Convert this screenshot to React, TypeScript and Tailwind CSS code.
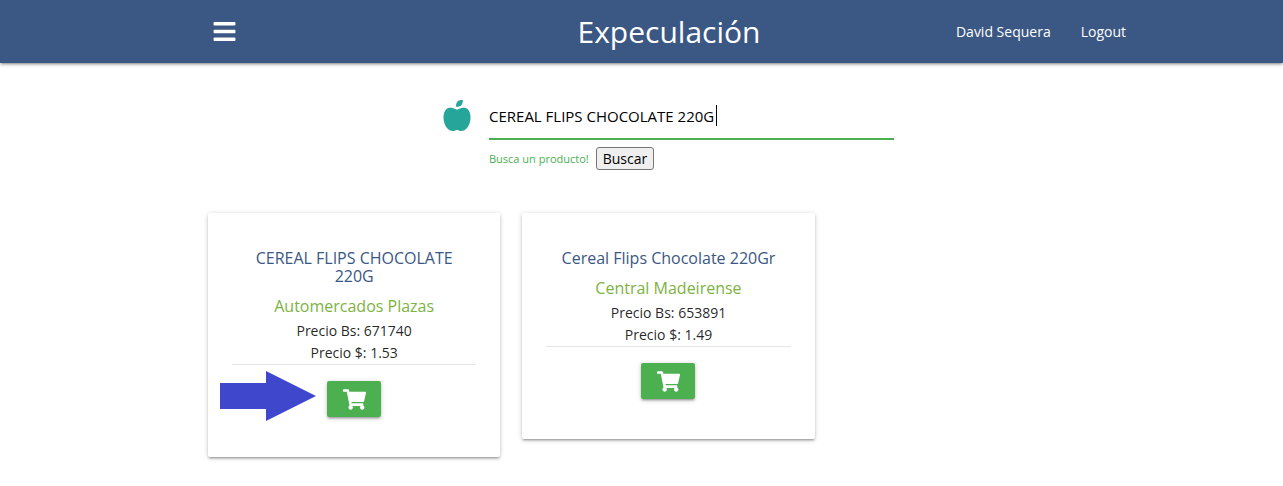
import { useState } from "react";
import { FaAppleAlt, FaBars, FaShoppingCart } from "react-icons/fa";

const products = [
  {
    name: "CEREAL FLIPS CHOCOLATE 220G",
    store: "Automercados Plazas",
    bs: "671740",
    usd: "1.53",
    highlighted: true,
  },
  {
    name: "Cereal Flips Chocolate 220Gr",
    store: "Central Madeirense",
    bs: "653891",
    usd: "1.49",
    highlighted: false,
  },
];

type Product = (typeof products)[number];

const shadow =
  "shadow-[0_2px_2px_0_rgba(0,0,0,0.14),0_3px_1px_-2px_rgba(0,0,0,0.12),0_1px_5px_0_rgba(0,0,0,0.2)]";

function Navbar() {
  return (
    <nav
      className={`grid h-[63px] grid-cols-[1fr_auto_1fr] items-center bg-[#3b5783] pr-[157px] pl-[212px] text-white ${shadow}`}
    >
      <button type="button" aria-label="Menú" className="justify-self-start">
        <FaBars size={25} />
      </button>
      <a href="#inicio" className="text-[30px] leading-10">
        Expeculación
      </a>
      <div className="flex gap-[30px] justify-self-end text-sm">
        <a href="#perfil">David Sequera</a>
        <a href="#logout">Logout</a>
      </div>
    </nav>
  );
}

function SearchForm() {
  const [query, setQuery] = useState("CEREAL FLIPS CHOCOLATE 220G");
  return (
    <form
      className="mx-auto flex w-[451px] gap-[18px] pt-8"
      onSubmit={(event) => event.preventDefault()}
    >
      <label htmlFor="producto" aria-label="Producto" className="pt-[5px] text-[#26a69a]">
        <FaAppleAlt size={31} className="w-[28px]" />
      </label>
      <div className="flex-1">
        <div className="relative">
          <input
            id="producto"
            type="text"
            value={query}
            onChange={(event) => setQuery(event.target.value)}
            className="block h-[45px] w-full border-b-2 border-[#4caf50] pb-0.5 text-[15px] text-black outline-none"
          />
          <span className="absolute top-[10px] left-[227px] h-[21px] w-px bg-black" />
        </div>
        <div className="flex items-center gap-[7px] pt-[7px]">
          <span className="pt-0.5 text-[11px] text-[#4caf50]">Busca un producto!</span>
          <button
            type="submit"
            className="h-[23px] rounded-[3px] border border-[#767676] bg-[#efefef] px-[6px] text-sm leading-5 text-black"
          >
            Buscar
          </button>
        </div>
      </div>
    </form>
  );
}

function ProductCard({ product }: { product: Product }) {
  return (
    <article
      className={`relative rounded-[2px] bg-white px-6 pt-9 pb-10 text-center ${shadow}`}
    >
      <h2 className="px-3 text-base leading-[18px] text-[#3b5783]">{product.name}</h2>
      <h3 className="mt-3 text-base leading-[18px] text-[#7cb342]">{product.store}</h3>
      <div className="mt-[5px] border-b border-[#e6e6e6] text-sm leading-[22px] text-black/87">
        <p>Precio Bs: {product.bs}</p>
        <p>Precio $: {product.usd}</p>
      </div>
      <button
        type="button"
        aria-label="Agregar al carrito"
        className={`mx-auto mt-4 flex h-9 w-[54px] items-center justify-center rounded-[2px] bg-[#4caf50] text-white ${shadow}`}
      >
        <FaShoppingCart size={23} />
      </button>
      {product.highlighted && (
        <svg
          viewBox="0 0 96 50"
          className="absolute bottom-9 left-3 h-[50px] w-24"
          aria-hidden="true"
        >
          <path d="M0 12H46V0L96 25L46 50V38H0Z" fill="#3f48cc" />
        </svg>
      )}
    </article>
  );
}

export default function App() {
  return (
    <div className="bg-white font-['Open_Sans','Noto_Sans',sans-serif]">
      <Navbar />
      <main className="pr-[154px] pb-7 pl-[208px]">
        <SearchForm />
        <section className="mt-[43px] grid grid-cols-3 items-start gap-[22px]">
          {products.map((product) => (
            <ProductCard key={product.name} product={product} />
          ))}
        </section>
      </main>
    </div>
  );
}
